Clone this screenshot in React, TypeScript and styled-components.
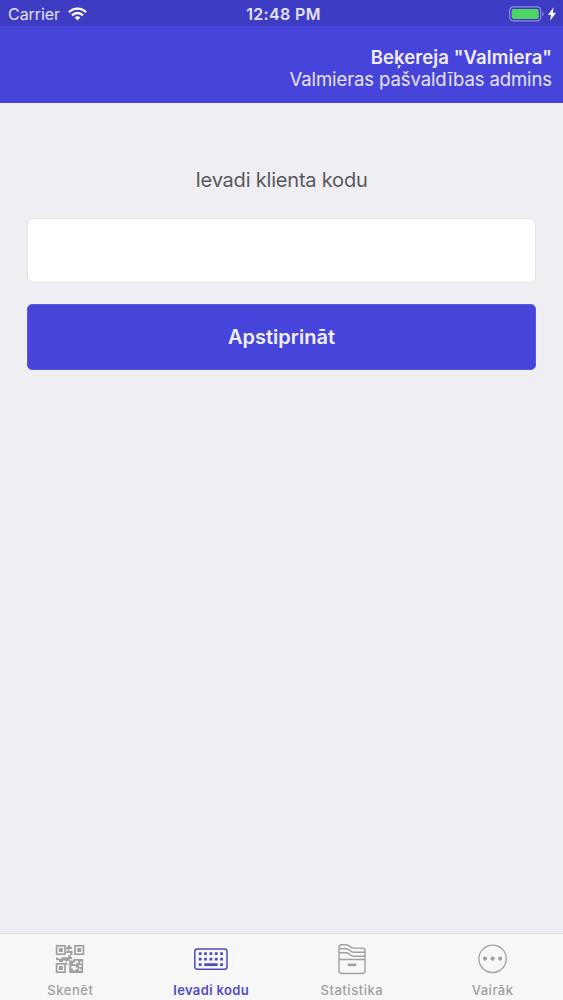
import React from "react";
import styled, { createGlobalStyle } from "styled-components";

const GlobalStyle = createGlobalStyle`
  * { box-sizing: border-box; }
  body {
    margin: 0;
    font-family: Inter, "Noto Sans", sans-serif;
    background: #efeff4;
  }
`;

const Screen = styled.div`
  display: flex;
  flex-direction: column;
  width: 100%;
  height: 100vh;
  min-height: 1000px;
  background: #efeff3;
`;

const StatusBar = styled.div`
  display: grid;
  grid-template-columns: 1fr auto 1fr;
  align-items: center;
  height: 26px;
  padding: 2px 7px 0 8px;
  background: #3e3cc5;
  color: #e4e3fa;
  font-size: 16px;
  line-height: 20px;
`;

const Carrier = styled.div`
  display: flex;
  align-items: center;
  gap: 8px;
  letter-spacing: -0.05px;
`;

const Clock = styled.div`
  font-size: 16px;
  font-weight: 600;
  letter-spacing: 0.35px;
  padding-left: 3px;
`;

const Power = styled.div`
  display: flex;
  align-items: center;
  justify-content: flex-end;
  gap: 3px;
  padding-bottom: 1px;
`;

const Header = styled.header`
  display: flex;
  flex-direction: column;
  align-items: flex-end;
  height: 77px;
  padding: 20px 11px 0 0;
  background: #4744dc;
  color: #e6e5fc;
  font-size: 18.5px;
  line-height: 22px;
  white-space: nowrap;
`;

const Company = styled.div`
  font-weight: 600;
  color: #efeffe;
  letter-spacing: 0.1px;
`;

const Role = styled.div`
  letter-spacing: -0.1px;
`;

const Form = styled.main`
  display: flex;
  flex: 1;
  flex-direction: column;
  padding: 64px 27px 0;
`;

const Label = styled.label`
  height: 51px;
  color: #58585c;
  font-size: 20px;
  line-height: 26px;
  letter-spacing: -0.2px;
  text-align: center;
`;

const CodeInput = styled.input`
  width: 100%;
  height: 65px;
  padding: 0 16px;
  border: 1px solid #e3e3e8;
  border-radius: 6px;
  outline: none;
  background: #fff;
  font: 20px Inter, sans-serif;
`;

const SubmitButton = styled.button`
  height: 66px;
  margin-top: 21px;
  padding: 0 0 1px;
  border: 1px solid #5b58e0;
  border-radius: 5px;
  background: #4744dc;
  color: #f0f0fe;
  font: 600 20px Inter, sans-serif;
  letter-spacing: 0;
`;

const TabBar = styled.nav`
  display: grid;
  grid-template-columns: repeat(4, 1fr);
  height: 67px;
  border-top: 1px solid #d9d9dd;
  background: #f7f7f8;
`;

const Tab = styled.div<{ $active?: boolean }>`
  display: flex;
  flex-direction: column;
  align-items: center;
  padding-top: 9px;
  color: ${(p) => (p.$active ? "#4f4bc6" : "#a0a0a0")};
  font-size: 13px;
  font-weight: ${(p) => (p.$active ? 600 : 500)};
  line-height: 16px;
`;

const TabLabel = styled.span<{ $tracking: number }>`
  margin-top: 7px;
  letter-spacing: ${(p) => p.$tracking}px;
`;

const WifiIcon = () => (
  <svg width="19" height="14" viewBox="0 0 19 14" fill="none" stroke="#fff" strokeWidth="2.3">
    <path d="M1 5.2C5.8.4 13.2.4 18 5.2" />
    <path d="M4 8.3c3.2-3.1 7.8-3.1 11 0" />
    <path d="M6.7 10.4c1.7-1.5 3.9-1.5 5.6 0L9.5 13.5z" fill="#fff" stroke="none" />
  </svg>
);

const BatteryIcon = () => (
  <svg width="36" height="16" viewBox="0 0 36 16">
    <rect x="0.7" y="0.9" width="31" height="14" rx="3.6" fill="none" stroke="#8d8bdf" strokeWidth="1.2" />
    <rect x="2.7" y="2.9" width="27" height="10" rx="1.8" fill="#4cd763" />
    <path d="M33.4 5.7c1.8.8 1.8 3.6 0 4.4z" fill="#8d8bdf" />
  </svg>
);

const BoltIcon = () => (
  <svg width="8" height="14" viewBox="0 0 8 14" fill="#fff">
    <path d="M5.6.3 0 7.9h3L2.1 13.7 8 5.8H4.8z" />
  </svg>
);

const QrIcon = () => (
  <svg width="32" height="32" viewBox="0 0 32 32" fill="currentColor">
    <g fill="none" stroke="currentColor" strokeWidth="1.7">
      <rect x="2.6" y="2.8" width="8.4" height="8.4" />
      <rect x="21" y="2.8" width="8.4" height="8.4" />
      <rect x="2.6" y="20.8" width="8.4" height="8.4" />
    </g>
    <path d="M4.9 5.1h3.9v3.9H4.9zM23.3 5.1h3.9v3.9h-3.9zM4.9 23.1h3.9v3.9H4.9z" />
    <path d="M14 2h2.2v2H18v2h-3v1.7h3.5V12h-1.6v2.2h1.3v1.9h-2.6v2h-3v2.1h1.3v1.5h-2.2v-4.2H8.9v1.4H5v-1.6H2v-2.6h2.4v1h3.2v-1.5h6.6v-2h2V10H12V8.3h1.6V5.8H12V4h2z" />
    <path
      fillRule="evenodd"
      d="M15.2 17.5h4v-1.6h9.9V30H15.2zM21.2 17.8v1.8h-2v1.7h3.3v-1.4h1.7v-2.1zM26.2 18.6v2.2h1.6v-2.2zM17.3 23v2.5h1.5v2h2.8v-1.4h2.2v-1.6h-2.2V23zM25 22.2v1.7h2.6v-1.7zM24.8 25.6v2.2h2.8v-1.2h-1.2v-1z"
    />
  </svg>
);

const KeyboardIcon = () => (
  <svg width="36" height="32" viewBox="0 0 36 32" fill="currentColor">
    <rect x="1.8" y="5.9" width="32.2" height="20.4" rx="2.5" fill="none" stroke="currentColor" strokeWidth="1.5" />
    {[7.2, 12.5, 17.9, 23.3, 28.6].map((x) => (
      <React.Fragment key={x}>
        <rect x={x - 1.4} y="9.2" width="2.8" height="2.8" rx=".5" />
        <rect x={x - 1.4} y="14.7" width="2.8" height="2.8" rx=".5" />
      </React.Fragment>
    ))}
    <path d="M5.8 20.2h2.8V23H5.8zM11.2 20.2h13.4V23H11.2zM27.2 20.2H30V23h-2.8z" />
  </svg>
);

const FolderIcon = () => (
  <svg width="32" height="32" viewBox="0 0 32 32" fill="none" stroke="currentColor" strokeWidth="1.4" strokeLinejoin="round">
    <path d="M3 16.5V4.4C3 2.5 4.1 1.7 5.7 1.7h4.6c3.2 0 4 3.4 7.2 3.4h9c1.7 0 2.5.8 2.5 2.3v20c0 2.1-1 3.1-3 3.1H6c-2 0-3-1-3-3.1V16.5h26" />
    <path d="M3 5.7h7.3c3.2 0 4 3.6 7.2 3.6H29" />
    <path d="M3 9.7h7.3c3.2 0 4 3.6 7.2 3.6H29" />
    <path d="M11.8 21.9h8.4" strokeWidth="2.7" />
  </svg>
);

const MoreIcon = () => (
  <svg width="32" height="32" viewBox="0 0 32 32" fill="currentColor">
    <circle cx="15.6" cy="15.8" r="13.7" fill="none" stroke="currentColor" strokeWidth="1.3" />
    <circle cx="8.1" cy="15.6" r="2.1" />
    <circle cx="15.6" cy="15.6" r="2.1" />
    <circle cx="23.1" cy="15.6" r="2.1" />
  </svg>
);

const tabs = [
  { label: "Skenēt", Icon: QrIcon, tracking: 0.55 },
  { label: "Ievadi kodu", Icon: KeyboardIcon, tracking: 0.35, active: true },
  { label: "Statistika", Icon: FolderIcon, tracking: 0.55 },
  { label: "Vairāk", Icon: MoreIcon, tracking: 0.5 },
];

export default function App() {
  return (
    <Screen>
      <GlobalStyle />
      <StatusBar>
        <Carrier>
          Carrier
          <WifiIcon />
        </Carrier>
        <Clock>12:48 PM</Clock>
        <Power>
          <BatteryIcon />
          <BoltIcon />
        </Power>
      </StatusBar>
      <Header>
        <Company>Beķereja "Valmiera"</Company>
        <Role>Valmieras pašvaldības admins</Role>
      </Header>
      <Form>
        <Label htmlFor="code">Ievadi klienta kodu</Label>
        <CodeInput id="code" />
        <SubmitButton type="button">Apstiprināt</SubmitButton>
      </Form>
      <TabBar>
        {tabs.map(({ label, Icon, tracking, active }) => (
          <Tab key={label} $active={active}>
            <Icon />
            <TabLabel $tracking={tracking}>{label}</TabLabel>
          </Tab>
        ))}
      </TabBar>
    </Screen>
  );
}
